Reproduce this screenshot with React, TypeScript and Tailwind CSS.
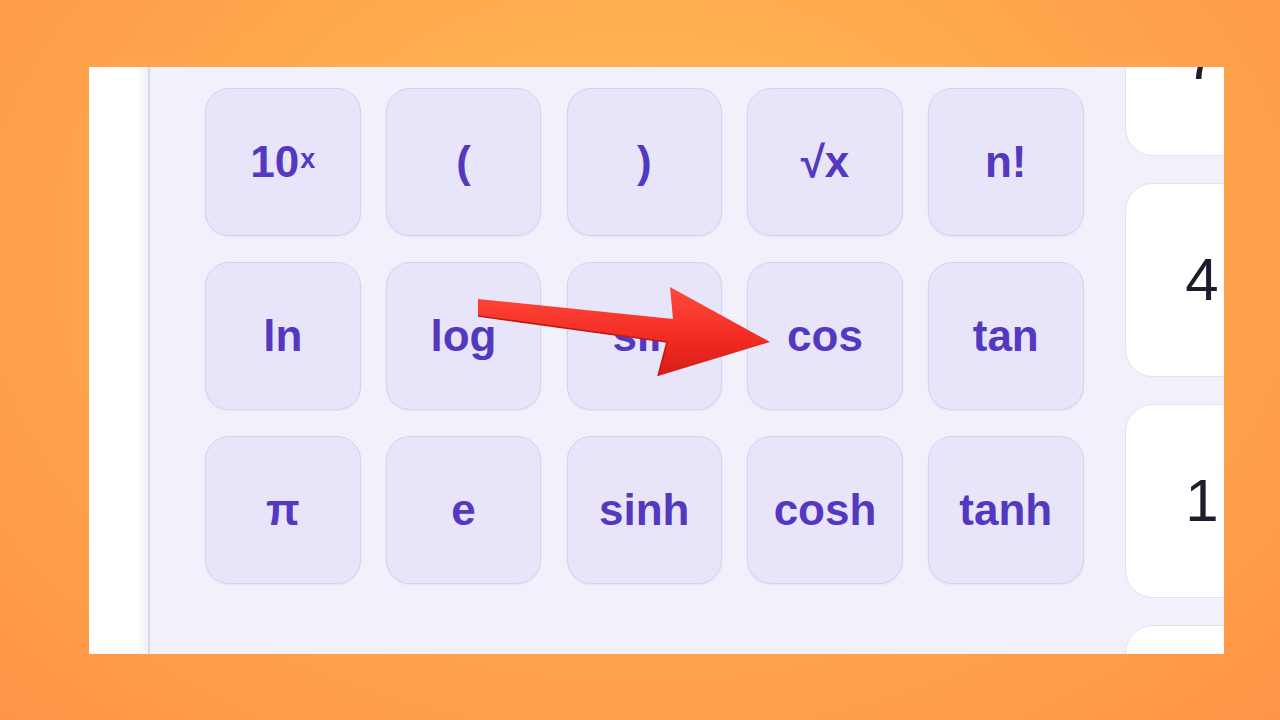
import React from 'react';

// Scientific keypad, cropped view with a highlight arrow on "cos"
const FONT = { fontFamily: '"Liberation Sans", Arial, sans-serif' };

type Key = { label: React.ReactNode; id: string };

const keys: Key[] = [
  { id: '10x', label: (<span>10<sup className="text-[27px] relative -top-[9px] ml-[1px]">x</sup></span>) },
  { id: 'lp', label: '(' },
  { id: 'rp', label: ')' },
  { id: 'sqrt', label: '√x' },
  { id: 'fact', label: 'n!' },
  { id: 'ln', label: 'ln' },
  { id: 'log', label: 'log' },
  { id: 'sin', label: 'sin' },
  { id: 'cos', label: 'cos' },
  { id: 'tan', label: 'tan' },
  { id: 'pi', label: 'π' },
  { id: 'e', label: 'e' },
  { id: 'sinh', label: 'sinh' },
  { id: 'cosh', label: 'cosh' },
  { id: 'tanh', label: 'tanh' },
];

// last card sits below the crop, its digit isn't visible
const digits = ['7', '4', '1', ''];

function Arrow() {
  return (
    <svg className="absolute left-0 top-0 pointer-events-none" width="1280" height="720" viewBox="0 0 1280 720">
      <defs>
        <linearGradient id="ar" x1="0" y1="0" x2="0" y2="1">
          <stop offset="0" stopColor="#ff4a3c" />
          <stop offset="0.6" stopColor="#f22a22" />
          <stop offset="1" stopColor="#d41d17" />
        </linearGradient>
      </defs>
      <polygon
        points="478,299 673,319 670,287 770,342 658,376 667,342 478,316"
        fill="url(#ar)"
      />
      <polyline points="478,316 667,342 658,376" fill="none" stroke="#c01a15" strokeWidth="1.5" strokeLinejoin="round" />
    </svg>
  );
}

export default function App() {
  return (
    <div
      className="relative w-[1280px] h-[720px] overflow-hidden bg-[radial-gradient(ellipse_at_50%_35%,#ffbe57_0%,#ffa64d_55%,#ff9446_100%)] pt-[67px] pl-[89px]"
      style={FONT}
    >
      <div className="flex w-[1135px] h-[587px] overflow-hidden bg-white">
        {/* left rail */}
        <div className="w-[61px] shrink-0 bg-[linear-gradient(90deg,#ffffff_0%,#ffffff_80%,#f1f0f6_100%)] border-r-2 border-[#dcd8ee]" />

        {/* keypad area */}
        <div className="flex flex-1 items-start bg-[#f2f0fb] pl-[55px]">
          <div className="mt-[21px] grid grid-cols-[repeat(5,155.5px)] auto-rows-[148px] gap-x-[25.25px] gap-y-[26px]">
            {keys.map((k) => (
              <div
                key={k.id}
                className="flex items-center justify-center rounded-[24px] border-[1.5px] border-[#d6d1f2] bg-[#e8e5fb] text-[44px] font-bold leading-none text-[#5438c0] shadow-[0_1px_2px_rgba(90,70,180,0.08)]"
              >
                {k.label}
              </div>
            ))}
          </div>

          <div className="ml-[41px] mt-[-105px] flex shrink-0 flex-col gap-[27px]">
            {digits.map((d, i) => (
              <div
                key={i}
                className="flex h-[194px] w-[155px] items-center justify-center rounded-[28px] border-[1.5px] border-[#e3e0f2] bg-white text-[60px] leading-none text-[#1f1c2e]"
              >
                {d}
              </div>
            ))}
          </div>
        </div>
      </div>

      <Arrow />
    </div>
  );
}
